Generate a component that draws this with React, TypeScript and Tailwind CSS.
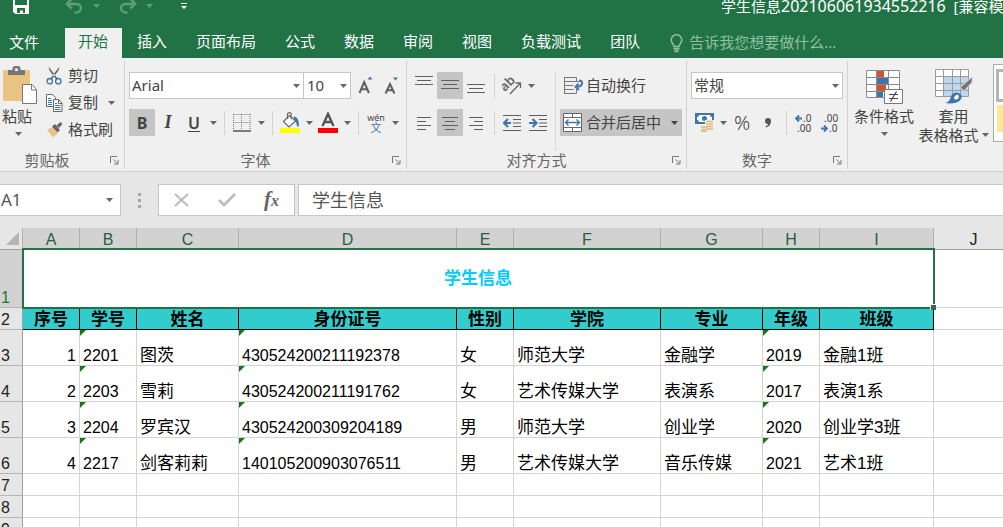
import React from "react";

const UI = "font-['Noto_Sans','Noto_Sans_CJK_SC',sans-serif]";
const CELL = "font-['Liberation_Sans','Noto_Sans_CJK_SC',sans-serif]";

function Arrow({ className = "text-[#666666]" }: { className?: string }) {
  return (
    <svg width="7" height="4" viewBox="0 0 7 4" className={`shrink-0 ${className}`} aria-hidden="true">
      <path d="M0 0h7L3.5 4z" fill="currentColor" />
    </svg>
  );
}

function DropButton({ label }: { label: string }) {
  return (
    <button type="button" aria-label={label} className="flex h-full w-3 items-center justify-center">
      <Arrow />
    </button>
  );
}

function Tool({ label, active = false, children }: { label: string; active?: boolean; children: React.ReactNode }) {
  return (
    <button
      type="button"
      aria-label={label}
      aria-pressed={active}
      className={`flex h-full w-[26px] shrink-0 items-center justify-center ${active ? "bg-[#c5c5c5]" : ""}`}
    >
      {children}
    </button>
  );
}

function Sep() {
  return <span className="ml-[5px] mr-1 h-6 w-px shrink-0 self-center bg-[#d2d2d2]" />;
}

function Group({ title, footer = "grid-cols-[1fr_20px]", children }: { title: string; footer?: string; children: React.ReactNode }) {
  return (
    <section aria-label={title} className="flex shrink-0 flex-col border-r border-[#d2d2d2]">
      <div className="flex h-[90px]">{children}</div>
      <div className={`grid h-[18px] items-center ${footer}`}>
        <span className="text-center text-[15px] leading-[18px] text-[#666666]">{title}</span>
        <button type="button" aria-label={`${title}设置`} className="flex justify-end pr-[5px]">
          <svg width="9" height="9" viewBox="0 0 9 9" fill="none" stroke="#777777" aria-hidden="true">
            <path d="M.5 7V.5H7M3.5 3.5l4 4M8 4v4H4" />
          </svg>
        </button>
      </div>
    </section>
  );
}

function Lines({ rows }: { rows: [number, number, number][] }) {
  return (
    <svg width="26" height="27" viewBox="0 0 26 27" aria-hidden="true">
      {rows.map(([x, y, w]) => (
        <rect key={y} x={x} y={y} width={w} height="1" fill="#5f5f5f" />
      ))}
    </svg>
  );
}

function TitleBar() {
  return (
    <header className="flex h-7 items-start overflow-hidden">
      <button type="button" aria-label="保存" className="ml-[13px]">
        <svg width="16" height="14" viewBox="0 0 16 14" aria-hidden="true">
          <path d="M0 0h2v5h12V0h2v14H2.500L0 12z" fill="#fff" />
          <path d="M4 8h8v5h-2v-2.500H7V13H4z" fill="#217346" />
        </svg>
      </button>
      <button type="button" aria-label="撤消" className="ml-[36px]">
        <svg width="19" height="14" viewBox="0 0 19 14" fill="none" stroke="#5f9c7b" strokeWidth="2.400" aria-hidden="true">
          <path d="M6.500 -1L1.800 4l5 4.500M2 4h9.500c6 0 6 8.500-.5 8.500H9.500" />
        </svg>
      </button>
      <span className="ml-[9px] mt-1"><Arrow className="text-[#5f9c7b]" /></span>
      <button type="button" aria-label="恢复" className="ml-[18px]">
        <svg width="19" height="14" viewBox="0 0 19 14" fill="none" stroke="#5f9c7b" strokeWidth="2.400" aria-hidden="true">
          <path d="M12.500 -1L17.200 4l-5 4.500M17 4H7.500c-6 0-6 8.500.5 8.500h1.500" />
        </svg>
      </button>
      <span className="ml-[9px] mt-1"><Arrow className="text-[#5f9c7b]" /></span>
      <button type="button" aria-label="自定义快速访问工具栏" className="ml-[28px] mt-[3px]">
        <svg width="7" height="7" viewBox="0 0 7 7" fill="#fff" aria-hidden="true">
          <path d="M0 0h6v1H0zM0 3h6L3 6z" />
        </svg>
      </button>
      <h1 className="ml-auto h-7 w-[282px] overflow-hidden whitespace-pre text-[15px] leading-3 text-white">
        学生信息<span className="text-[16px]">202106061934552216</span>{"  "}[兼容模式]
      </h1>
    </header>
  );
}

const tabs = ["插入", "页面布局", "公式", "数据", "审阅", "视图", "负载测试", "团队"];

function Tabs() {
  return (
    <nav className="flex h-[30px] text-[15px] text-white">
      <button type="button" className="w-[65px] pb-px pl-[9px] text-left">文件</button>
      <button type="button" aria-current="page" className="bg-[#f0f0f0] pb-[3px] pl-[13px] pr-[14px] text-[#217346]">开始</button>
      {tabs.map((t) => (
        <button key={t} type="button" className="shrink-0 pb-[3px] pl-[15px] pr-[14px]">{t}</button>
      ))}
      <label className="ml-4 flex min-w-0 flex-1 items-center gap-[6px]">
        <svg width="13" height="19" viewBox="0 0 13 19" fill="none" stroke="#90bfa3" strokeWidth="1.500" aria-hidden="true">
          <path d="M4 12.500C4 10 1.200 9.200 1.200 6a5.300 5.300 0 0 1 10.600 0c0 3.200-2.800 4-2.800 6.500z" />
          <path d="M3.500 14.800h6M4.500 17.200h4" strokeWidth="2" />
        </svg>
        <input
          aria-label="操作说明搜索"
          placeholder="告诉我您想要做什么..."
          className="min-w-0 flex-1 bg-transparent pb-px text-[15px] text-white outline-none placeholder:text-[#90bfa3] placeholder:opacity-100"
        />
      </label>
    </nav>
  );
}

function Clipboard() {
  return (
    <Group title="剪贴板" footer="grid-cols-[94px_30px]">
      <button type="button" className="flex w-[37px] flex-col items-start pt-[5px] text-[#444444]">
        <svg width="37" height="38" viewBox="0 0 37 38" aria-hidden="true">
          <rect x="3" y="4" width="27" height="31" rx="1" fill="#eac282" />
          <path d="M8 9V4h4.500V2.500Q12.500 0 15 0h3q2.500 0 2.500 2.500V4H25v5z" fill="#777777" />
          <rect x="15" y="2.500" width="3" height="2.500" fill="#f0f0f0" />
          <path d="M22.500 18.500h9.500l4.500 5v14H22.500z" fill="#fff" stroke="#777777" />
          <path d="M31.500 18.500v5.500h5" fill="none" stroke="#777777" />
        </svg>
        <span className="pl-[2px] text-[15px] leading-6">粘贴</span>
        <span className="flex h-3 items-center pl-[15px]"><Arrow /></span>
      </button>
      <div className="flex flex-col pl-[9px] pt-px text-[15px] text-[#444444]">
        <button type="button" className="flex h-[27px] items-center gap-[5px]">
          <svg width="17" height="19" viewBox="0 0 17 19" fill="none" aria-hidden="true">
            <path d="M2.500 0.500l1 4 7 9.500 1.500-1zM13.500 0.500l-1 4-7 9.500-1.500-1z" fill="#666666" />
            <circle cx="3.700" cy="15.200" r="2.700" stroke="#3e75ad" strokeWidth="1.300" />
            <circle cx="12.300" cy="15.200" r="2.700" stroke="#3e75ad" strokeWidth="1.300" />
          </svg>
          剪切
        </button>
        <div className="flex">
          <button type="button" className="flex h-[27px] items-center gap-[5px]">
            <svg width="17" height="18" viewBox="0 0 17 18" aria-hidden="true">
              <path d="M.5.500h6l3 3v9h-9z" fill="#fff" stroke="#666666" />
              <path d="M2 4.500h3M2 6.500h4M2 8.500h4M2 10.500h4" stroke="#3e75ad" />
              <path d="M7.500 5.500h5l3.500 3.500v8.500H7.500z" fill="#fff" stroke="#666666" />
              <path d="M12.500 5.500v4H16" fill="none" stroke="#666666" />
              <path d="M9 9.500h2M9 11.500h5.500M9 13.500h5.500M9 15.500h5.500" stroke="#3e75ad" />
            </svg>
            复制
          </button>
          <button type="button" aria-label="复制选项" className="ml-[10px] flex items-center"><Arrow /></button>
        </div>
        <button type="button" className="flex h-[27px] items-center gap-[5px]">
          <svg width="17" height="17" viewBox="0 0 17 17" aria-hidden="true">
            <path d="M1 9l6-3 5 6-5 4.500z" fill="#eac282" />
            <path d="M6 5.500l3-2.500 5 6-2.500 2.500z" fill="#666666" />
            <path d="M10.500 4.500l4-3.500 2 2-3.500 4z" fill="#666666" />
          </svg>
          格式刷
        </button>
      </div>
    </Group>
  );
}

function FontGroup() {
  return (
    <Group title="字体">
      <div className="flex flex-col gap-[10px] pl-1 pr-px pt-[11px] text-[#444444]">
        <div className="flex h-[27px]">
          <div className="relative w-[175px]">
            <select aria-label="字体" className="h-full w-full appearance-none border border-[#c6c6c6] bg-white pl-[2px] text-[15px] outline-none">
              <option>Arial</option>
            </select>
            <span className="pointer-events-none absolute inset-y-0 right-1 flex items-center"><Arrow /></span>
          </div>
          <div className="relative w-[47px]">
            <select aria-label="字号" className="h-full w-full appearance-none border border-l-0 border-[#c6c6c6] bg-white pl-[3px] text-[15px] outline-none">
              <option>10</option>
            </select>
            <span className="pointer-events-none absolute inset-y-0 right-1 flex items-center"><Arrow /></span>
          </div>
          <div className="flex pl-[2px]">
            <Tool label="增大字号">
              <svg width="16" height="20" viewBox="0 0 16 20" aria-hidden="true">
                <path d="M1.500 17L6.200 6l4.700 11M3.200 13.300h6" fill="none" stroke="#5f5f5f" strokeWidth="2" />
                <path d="M9.500 3.500h5l-2.500-3z" fill="#3e75ad" />
              </svg>
            </Tool>
            <Tool label="减小字号">
              <svg width="16" height="20" viewBox="0 0 16 20" aria-hidden="true">
                <path d="M1.500 17.500L6 8l4.500 9.500M3.200 14.300h5.600" fill="none" stroke="#5f5f5f" strokeWidth="2" />
                <path d="M9 1.500h5l-2.500 3z" fill="#3e75ad" />
              </svg>
            </Tool>
          </div>
        </div>
        <div className="flex h-[27px]">
          <Tool label="加粗" active><span className="text-[16px] font-bold">B</span></Tool>
          <Tool label="倾斜"><span className="font-['Liberation_Serif',serif] text-[18px] font-bold italic">I</span></Tool>
          <Tool label="下划线"><span className="text-[16px] font-semibold underline underline-offset-2">U</span></Tool>
          <DropButton label="下划线选项" />
          <Sep />
          <Tool label="边框">
            <svg width="18" height="18" viewBox="0 0 18 18" fill="none" stroke="#777777" aria-hidden="true">
              <path d="M.5.500h17M.5 8.500h17M.5 0v16M8.500 0v16M17 0v16" strokeDasharray="1 1" />
              <path d="M0 17h18" strokeWidth="1.500" stroke="#555555" />
            </svg>
          </Tool>
          <DropButton label="边框选项" />
          <Sep />
          <Tool label="填充颜色">
            <svg width="20" height="21" viewBox="0 0 20 21" aria-hidden="true">
              <path d="M3.500 9.500l6-6 6 5.500-6.500 6z" fill="#fff" stroke="#666666" strokeWidth="1.200" />
              <path d="M7.500 7V2.500Q7.500.700 9.500.700t1.500 1.800V7" fill="none" stroke="#666666" strokeWidth="1.200" />
              <path d="M13.500 4.500q5.500 0 5.500 9.500l-2 .5q-.5-5-2.500-6z" fill="#3e75ad" />
              <rect y="16" width="20" height="5" fill="#ffff00" />
            </svg>
          </Tool>
          <DropButton label="填充颜色选项" />
          <Tool label="字体颜色">
            <svg width="20" height="21" viewBox="0 0 20 21" aria-hidden="true">
              <path d="M4.500 14L10 2l5.500 12M6.500 10h7" fill="none" stroke="#555555" strokeWidth="2.400" />
              <rect y="16" width="20" height="5" fill="#ff0000" />
            </svg>
          </Tool>
          <DropButton label="字体颜色选项" />
          <Sep />
          <Tool label="拼音">
            <span className="flex flex-col items-center">
              <span className="text-[9px] leading-[9px]">wén</span>
              <span className="text-[11px] leading-[11px] text-[#3e75ad]">文</span>
            </span>
          </Tool>
          <DropButton label="拼音选项" />
        </div>
      </div>
    </Group>
  );
}

function AlignGroup() {
  return (
    <Group title="对齐方式">
      <div className="flex pl-1 pr-1 pt-[11px] text-[15px] text-[#444444]">
        <div className="flex flex-col gap-[10px]">
          <div className="flex h-[27px]">
            <Tool label="顶端对齐"><Lines rows={[[4, 4, 18], [6, 8, 14], [4, 12, 18]]} /></Tool>
            <Tool label="垂直居中" active><Lines rows={[[4, 8, 18], [6, 12, 14], [4, 16, 18]]} /></Tool>
            <Tool label="底端对齐"><Lines rows={[[4, 12, 18], [6, 16, 14], [4, 20, 18]]} /></Tool>
            <Sep />
            <Tool label="方向">
              <svg width="20" height="19" viewBox="0 0 20 19" aria-hidden="true">
                <g transform="rotate(-45 7 9)">
                  <text x="-1" y="11" fontSize="13" fontWeight="600" fill="#666666">ab</text>
                </g>
                <path d="M8 18L18 7.500M13.500 7H18.500V12" fill="none" stroke="#666666" strokeWidth="1.300" />
              </svg>
            </Tool>
            <DropButton label="方向选项" />
          </div>
          <div className="flex h-[27px]">
            <Tool label="左对齐"><Lines rows={[[6, 8, 14], [6, 12, 9], [6, 16, 14], [6, 20, 9]]} /></Tool>
            <Tool label="居中" active><Lines rows={[[5, 8, 16], [8, 12, 10], [5, 16, 16], [8, 20, 10]]} /></Tool>
            <Tool label="右对齐"><Lines rows={[[6, 8, 14], [11, 12, 9], [6, 16, 14], [11, 20, 9]]} /></Tool>
            <Sep />
            <Tool label="减少缩进量">
              <svg width="18" height="16" viewBox="0 0 18 16" aria-hidden="true">
                <path d="M0 .5h18M10 4.500h8M10 8h8M10 11.500h8M0 15.500h18" stroke="#5f5f5f" />
                <path d="M8 8H1.500M5 4L1 8l4 4" fill="none" stroke="#3e75ad" strokeWidth="2.200" />
              </svg>
            </Tool>
            <Tool label="增加缩进量">
              <svg width="18" height="16" viewBox="0 0 18 16" aria-hidden="true">
                <path d="M0 .5h18M10 4.500h8M10 8h8M10 11.500h8M0 15.500h18" stroke="#5f5f5f" />
                <path d="M0 8h6.500M3.500 4l4 4-4 4" fill="none" stroke="#3e75ad" strokeWidth="2.200" />
              </svg>
            </Tool>
          </div>
        </div>
        <span className="mx-1 w-px bg-[#d8d8d8]" />
        <div className="flex w-[122px] flex-col gap-[10px]">
          <button type="button" className="flex h-[27px] items-center gap-[3px] pl-1">
            <svg width="19" height="19" viewBox="0 0 19 19" fill="none" aria-hidden="true">
              <path d="M.5 1v17M.5 1.500h12v4M.5 17.500h12V13" stroke="#777777" />
              <path d="M.5 5.500h15M.5 9.500h9M.5 13.500h9" stroke="#777777" />
              <path d="M15 4.500q3.500 0 3 3-.5 3.500-6.500 3.500M14.500 7.500L11.500 11l3.500 3" stroke="#3e75ad" strokeWidth="1.900" />
            </svg>
            自动换行
          </button>
          <button type="button" className="flex h-[27px] items-center gap-1 bg-[#c5c5c5] pl-[3px]">
            <svg width="19" height="19" viewBox="0 0 19 19" aria-hidden="true">
              <path d="M.5.500h18v18H.5z" fill="#fff" stroke="#666666" />
              <path d="M0 4.500h19M0 14.500h19M9.500 0v4.500M9.500 14.500V19" stroke="#666666" />
              <path d="M2.500 9.500h14M5.500 6.500l-3 3 3 3M13.500 6.500l3 3-3 3" fill="none" stroke="#3e75ad" strokeWidth="1.400" />
            </svg>
            合并后居中
            <span className="ml-[6px]"><Arrow className="text-[#444444]" /></span>
          </button>
        </div>
      </div>
    </Group>
  );
}

function DecimalIcon({ more }: { more: boolean }) {
  return (
    <svg width="18" height="20" viewBox="0 0 18 20" fontSize="10" aria-hidden="true">
      <text x={more ? 8 : 3} y="9" fill="#444444">{more ? ".0" : ".00"}</text>
      <text x={more ? 2 : 8} y="19" fill="#444444">{more ? ".00" : ".0"}</text>
      {more ? (
        <path d="M7 5.500H1.500M4 2.500l-3 3 3 3" fill="none" stroke="#3e75ad" strokeWidth="1.800" />
      ) : (
        <path d="M0 15.500h5.500M3 12.500l3 3-3 3" fill="none" stroke="#3e75ad" strokeWidth="1.800" />
      )}
    </svg>
  );
}

function NumberGroup() {
  return (
    <Group title="数字">
      <div className="flex flex-col gap-[10px] pl-1 pr-1 pt-[11px] text-[#444444]">
        <div className="relative h-[27px]">
          <select aria-label="数字格式" className="h-full w-full appearance-none border border-[#c6c6c6] bg-white pl-[2px] text-[15px] outline-none">
            <option>常规</option>
          </select>
          <span className="pointer-events-none absolute inset-y-0 right-1 flex items-center"><Arrow /></span>
        </div>
        <div className="flex h-[27px]">
          <Tool label="会计数字格式">
            <svg width="19" height="19" viewBox="0 0 19 19" aria-hidden="true">
              <rect width="19" height="11" fill="#3e75ad" />
              <path d="M2 4q2 0 2-2h11q0 2 2 2v3q-2 0-2 2H4q0-2-2-2z" fill="#fff" />
              <circle cx="9.500" cy="5.500" r="2.500" fill="#3e75ad" />
              <path d="M10 7h9v12H6v-6h4z" fill="#f0f0f0" />
              <path d="M11 8.500h7M11 11h7M11 13.500h7M11 16h7M6 14h6M6 16.500h6M6 18.500h6" stroke="#e3b677" strokeWidth="1.600" />
            </svg>
          </Tool>
          <DropButton label="会计数字格式选项" />
          <Tool label="百分比样式"><span className="text-[20px] font-light leading-5">%</span></Tool>
          <Tool label="千位分隔样式">
            <svg width="8" height="10" viewBox="0 0 8 10" aria-hidden="true">
              <path d="M4 0a3 3 0 0 1 3 3q0 5-5 6.500l-.5-1Q4 7.500 4 6a3 3 0 1 1 0-6z" fill="#555555" />
            </svg>
          </Tool>
          <Sep />
          <Tool label="增加小数位数"><DecimalIcon more /></Tool>
          <Tool label="减少小数位数"><DecimalIcon more={false} /></Tool>
        </div>
      </div>
    </Group>
  );
}

function StylesGroup() {
  return (
    <section aria-label="样式" className="flex min-w-0 flex-1 items-start pl-1 text-[15px] text-[#444444]">
      <button type="button" className="flex w-16 shrink-0 flex-col items-center pt-[5px]">
        <svg width="38" height="38" viewBox="0 0 38 38" aria-hidden="true">
          <path d="M1.500 4.500h33v27h-33z" fill="#fff" />
          <rect x="12" y="5" width="7" height="6" fill="#d35230" />
          <rect x="12" y="12" width="11" height="6" fill="#3e75ad" />
          <rect x="12" y="19" width="9" height="6" fill="#d35230" />
          <rect x="12" y="26" width="6" height="5" fill="#3e75ad" />
          <path d="M1.500 4.500h33v27h-33zM1.500 11.500h33M1.500 18.500h33M1.500 25.500h33M11.500 4.500v27M23.500 4.500v27" fill="none" stroke="#8a8a8a" />
          <path d="M19.500 23.500h18v14h-18z" fill="#fff" stroke="#777777" />
          <path d="M24 28.500h9M24 32.500h9M31.500 25.500l-6 10" stroke="#444444" strokeWidth="1.200" />
        </svg>
        <span className="leading-6">条件格式</span>
        <span className="flex h-3 items-center"><Arrow /></span>
      </button>
      <button type="button" className="flex w-[75px] shrink-0 flex-col items-center pt-[5px]">
        <svg width="38" height="38" viewBox="0 0 38 38" aria-hidden="true">
          <path d="M.5 3.500h33v27H.5z" fill="#fff" />
          <path d="M9 10.500h24.500v20H9z" fill="#bfd7ee" />
          <path d="M.5 3.500h33v27H.5zM.5 10.500h33M.5 17.500h33M.5 24.500h33M8.500 3.500v27M17.500 3.500v27M25.500 3.500v27" fill="none" stroke="#9a9a9a" />
          <path d="M37.500 10.500l-.5 6-8 8.500-4-3.500z" fill="#777777" stroke="#f0f0f0" strokeWidth=".8" />
          <path d="M10 37q5-1 6-7 3-5 8-3 5 3 1 7.500-5 4-15 2.500z" fill="#3e75ad" />
          <path d="M19 33q0-4 4-4.500 2 3-1 5z" fill="#fff" />
        </svg>
        <span className="leading-6">套用</span>
        <span className="-mt-[3px] flex items-center gap-[3px] whitespace-nowrap leading-5">表格格式<Arrow /></span>
      </button>
      <div className="ml-[2px] mt-[3px] flex h-[78px] min-w-0 flex-1 flex-col gap-[3px] overflow-hidden border border-r-0 border-[#ababab] bg-white pl-[2px] pt-1">
        <div className="h-[33px] border-[3px] border-r-0 border-[#b5b5b5] bg-white" />
        <div className="ml-px h-[27px] bg-[#ffe699]" />
      </div>
    </section>
  );
}

function FormulaBar() {
  return (
    <div className="flex border-t border-[#d0d0d0] bg-[#e6e6e6] pb-3 pt-3 text-[#555555]">
      <div className="relative h-8 w-[121px] shrink-0">
        <input aria-label="名称框" defaultValue="A1" className="h-full w-full border border-l-0 border-[#c6c6c6] bg-white pb-[2px] pl-px text-[17px] outline-none" />
        <span className="pointer-events-none absolute inset-y-0 right-2 flex items-center"><Arrow /></span>
      </div>
      <div className="flex w-[37px] flex-col items-center justify-center gap-[3px]">
        <i className="size-[3px] bg-[#a6a6a6]" />
        <i className="size-[3px] bg-[#a6a6a6]" />
        <i className="size-[3px] bg-[#a6a6a6]" />
      </div>
      <div className="flex w-[137px] shrink-0 border border-[#c6c6c6] bg-white">
        <button type="button" aria-label="取消" className="flex flex-1 items-center justify-center">
          <svg width="15" height="14" viewBox="0 0 15 14" stroke="#bcbcbc" strokeWidth="2" aria-hidden="true">
            <path d="M1 1l13 12M14 1L1 13" />
          </svg>
        </button>
        <button type="button" aria-label="输入" className="flex flex-1 items-center justify-center">
          <svg width="18" height="14" viewBox="0 0 18 14" fill="none" stroke="#bcbcbc" strokeWidth="2.800" aria-hidden="true">
            <path d="M1 7l5 5L17 1" />
          </svg>
        </button>
        <button type="button" aria-label="插入函数" className="flex-1 font-['Liberation_Serif',serif] text-[21px] font-bold italic leading-7 text-[#666666]">
          f<span className="text-[16px]">x</span>
        </button>
      </div>
      <input aria-label="编辑栏" defaultValue="学生信息" className="ml-[3px] h-8 min-w-0 flex-1 border border-r-0 border-[#c6c6c6] bg-white pb-[2px] pl-[13px] text-[18px] outline-none" />
    </div>
  );
}

const letters = ["A", "B", "C", "D", "E", "F", "G", "H", "I"];
const heads = ["序号", "学号", "姓名", "身份证号", "性别", "学院", "专业", "年级", "班级"];
const records = [
  ["1", "2201", "图茨", "430524200211192378", "女", "师范大学", "金融学", "2019", "金融1班"],
  ["2", "2203", "雪莉", "430524200211191762", "女", "艺术传媒大学", "表演系", "2017", "表演1系"],
  ["3", "2204", "罗宾汉", "430524200309204189", "男", "师范大学", "创业学", "2020", "创业学3班"],
  ["4", "2217", "剑客莉莉", "140105200903076511", "男", "艺术传媒大学", "音乐传媒", "2021", "艺术1班"],
];

function RowHead({ n, active = false }: { n: number; active?: boolean }) {
  return (
    <th
      scope="row"
      className={`border-b border-r border-b-[#b5b5b5] border-r-[#9f9f9f] p-0 pl-px text-left align-bottom text-[16px] font-normal leading-[18px] ${
        active ? "bg-[#d2d2d2] text-[#217346]" : "bg-[#e6e6e6] text-[#222222]"
      }`}
    >
      {n}
    </th>
  );
}

function Sheet() {
  return (
    <main className={`min-h-0 flex-1 overflow-hidden bg-white ${CELL}`}>
      <table className="w-full table-fixed border-separate border-spacing-0 text-black">
        <colgroup>
          <col className="w-[23px]" />
          <col className="w-[57px]" />
          <col className="w-[57px]" />
          <col className="w-[102px]" />
          <col className="w-[218px]" />
          <col className="w-[57px]" />
          <col className="w-[147px]" />
          <col className="w-[102px]" />
          <col className="w-[57px]" />
          <col className="w-[114px]" />
          <col />
        </colgroup>
        <thead>
          <tr className="h-[22px] text-[16px] leading-[18px]">
            <td className="border-b border-r border-b-[#9f9f9f] border-r-[#b0b0b0] bg-[#e6e6e6] p-0">
              <svg width="13" height="13" viewBox="0 0 13 13" className="ml-[6px]" aria-hidden="true">
                <path d="M13 0v13H0z" fill="#b4b4b4" />
              </svg>
            </td>
            {letters.map((l) => (
              <th key={l} scope="col" className="border-b border-r border-b-[#9f9f9f] border-r-[#b0b0b0] bg-[#d2d2d2] p-0 pt-[2px] font-normal text-[#2b5c40]">
                {l}
              </th>
            ))}
            <th scope="col" className="border-b border-[#9f9f9f] bg-[#e6e6e6] p-0 pl-[10px] pt-[2px] font-normal text-[#222222]">J</th>
          </tr>
        </thead>
        <tbody>
          <tr className="h-[58px]">
            <RowHead n={1} active />
            <td colSpan={9} className="relative border-b border-r border-[#d4d4d4] p-0 text-center text-[17px] font-bold text-[#00ccff]">
              学生信息
              <span className="pointer-events-none absolute -bottom-[2px] -left-px -right-[2px] -top-[2px] z-10 border-2 border-[#217346]" />
              <span className="pointer-events-none absolute -bottom-[3px] -right-[3px] z-20 size-[6px] border-l border-t border-white bg-[#217346]" />
            </td>
            <td className="border-b border-[#d4d4d4] p-0" />
          </tr>
          <tr className="h-[22px]">
            <RowHead n={2} />
            {heads.map((h) => (
              <td key={h} className="border-b border-r border-black bg-[#33cccc] p-0 pt-[2px] text-center text-[17px] font-bold leading-[18px]">{h}</td>
            ))}
            <td className="border-b border-[#d4d4d4] p-0" />
          </tr>
          {records.map((r, i) => (
            <tr key={r[0]} className="h-9">
              <RowHead n={i + 3} />
              {r.map((v, c) => (
                <td
                  key={c}
                  className={`relative whitespace-nowrap border-b border-r border-[#d4d4d4] px-[3px] py-0 align-bottom leading-[18px] ${
                    /^\d+$/.test(v) ? "text-[16px]" : "text-[17px]"
                  } ${c === 0 ? "text-right" : ""}`}
                >
                  {v}
                  {(c === 1 || c === 3 || c === 7) && (
                    <i className="absolute left-0 top-0 border-r-[6px] border-t-[6px] border-r-transparent border-t-[#137a13]" />
                  )}
                </td>
              ))}
              <td className="border-b border-[#d4d4d4] p-0" />
            </tr>
          ))}
          {[7, 8, 9].map((n) => (
            <tr key={n} className="h-[22px]">
              <RowHead n={n} />
              {letters.map((l) => (
                <td key={l} className="border-b border-r border-[#d4d4d4] p-0" />
              ))}
              <td className="border-b border-[#d4d4d4] p-0" />
            </tr>
          ))}
        </tbody>
      </table>
    </main>
  );
}

export default function App() {
  return (
    <div className={`flex h-screen w-full flex-col overflow-hidden bg-[#217346] ${UI}`}>
      <TitleBar />
      <Tabs />
      <div className="flex bg-[#f0f0f0] pb-[2px] pt-[3px]">
        <Clipboard />
        <FontGroup />
        <AlignGroup />
        <NumberGroup />
        <StylesGroup />
      </div>
      <FormulaBar />
      <Sheet />
    </div>
  );
}
